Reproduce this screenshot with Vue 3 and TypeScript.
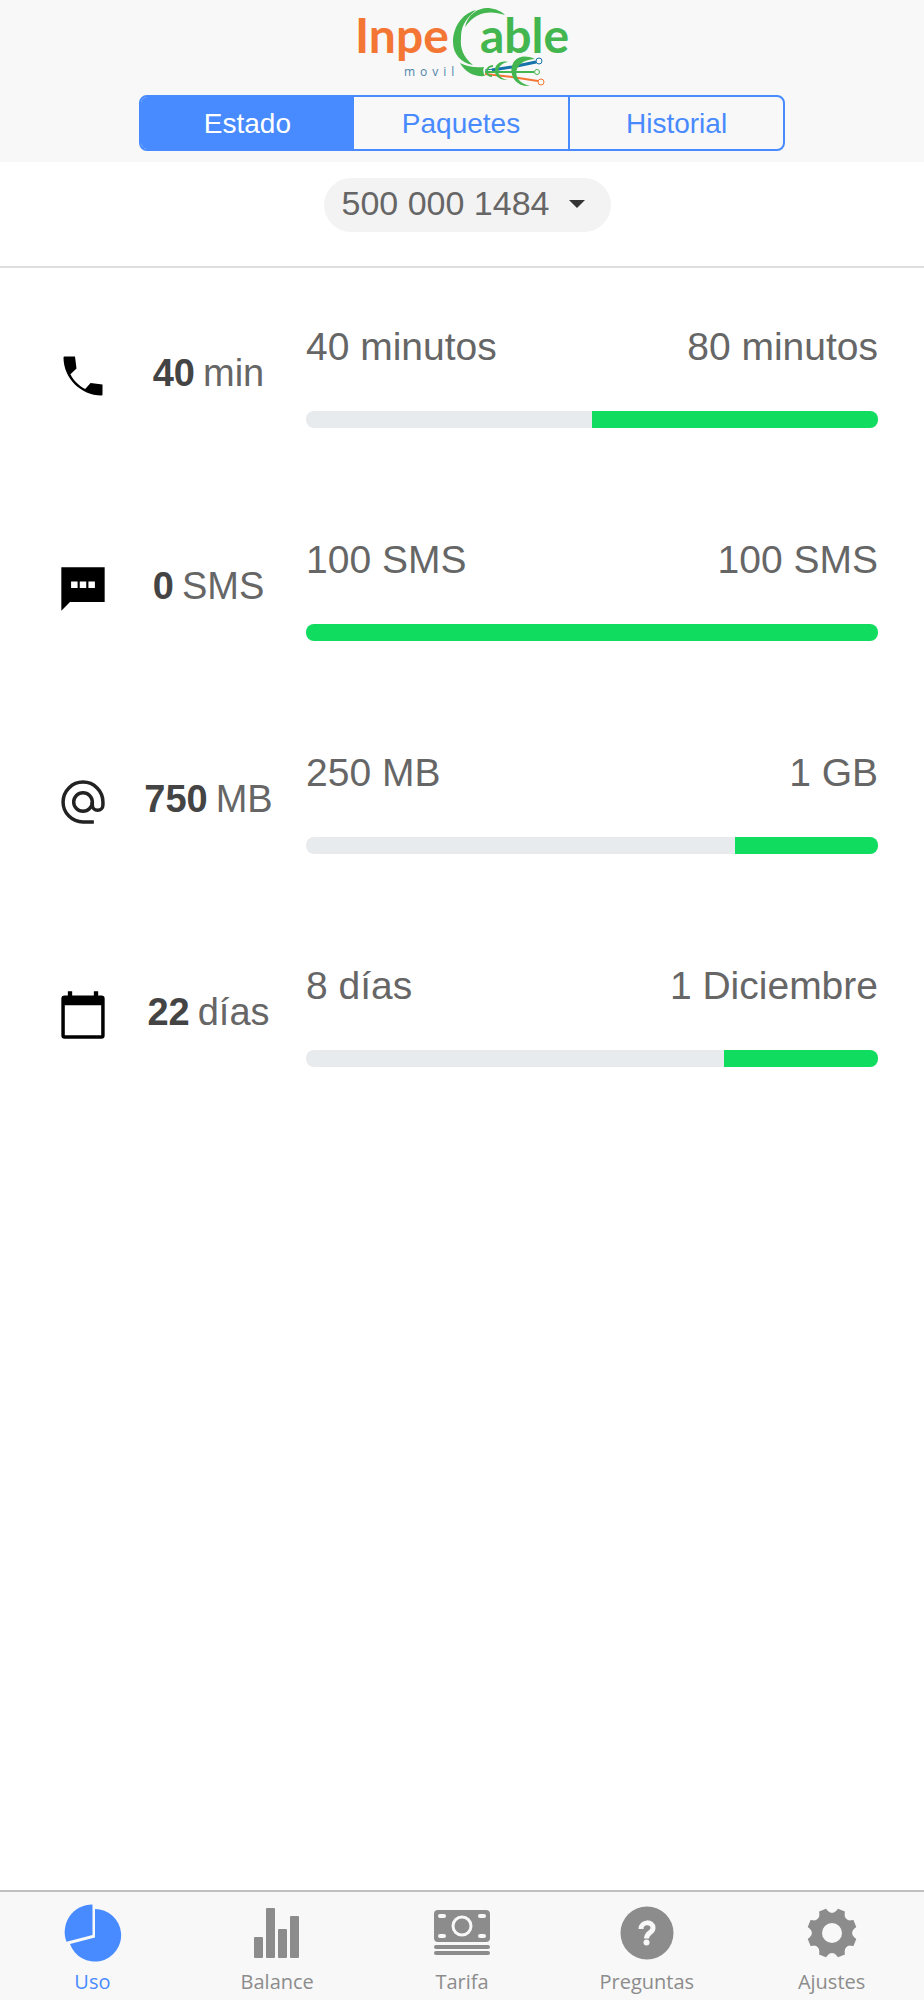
<script setup lang="ts">
import { ref } from 'vue'

type IconName = 'call' | 'text' | 'at' | 'calendar'

interface Usage {
  icon: IconName
  amount: string
  unit: string
  from: string
  to: string
  percent: number
}

const segments = ['Estado', 'Paquetes', 'Historial']
const activeSegment = ref('Estado')

const phones = ['500 000 1484']
const phone = ref(phones[0])

const usages: Usage[] = [
  { icon: 'call', amount: '40', unit: 'min', from: '40 minutos', to: '80 minutos', percent: 50 },
  { icon: 'text', amount: '0', unit: 'SMS', from: '100 SMS', to: '100 SMS', percent: 100 },
  { icon: 'at', amount: '750', unit: 'MB', from: '250 MB', to: '1 GB', percent: 25 },
  { icon: 'calendar', amount: '22', unit: 'días', from: '8 días', to: '1 Diciembre', percent: 27 },
]

const tabs = ['Uso', 'Balance', 'Tarifa', 'Preguntas', 'Ajustes']
const activeTab = ref('Uso')

// Gear outline: eight teeth separated by round notches.
const gear = (() => {
  const point = (r: number, deg: number) => {
    const a = (deg * Math.PI) / 180
    return `${(30 + r * Math.cos(a)).toFixed(2)} ${(30 + r * Math.sin(a)).toFixed(2)}`
  }
  let d = ''
  for (let i = 0; i < 8; i++) {
    const c = i * 45
    d += `${i ? 'L' : 'M'}${point(25, c - 14)}L${point(22.6, c - 11)}A5.5 5.5 0 0 0 ${point(22.6, c + 11)}L${point(25, c + 14)}`
  }
  return d + 'Z'
})()
</script>

<template>
  <div class="app">
    <header class="header">
      <svg class="logo" viewBox="0 0 240 92" role="img" aria-label="InpeCable movil">
        <text class="word orange" x="13" y="53">Inpe</text>
        <text class="word green" x="138" y="53">able</text>
        <text class="sub" x="62" y="76">movil</text>
        <path class="green" d="M134 10C119 14 111 28 111 42C111 54 119 63 131 65C121 57 118 48 119 38C119 29 121 21 134 10Z" />
        <path class="green" d="M123 27C126 13 138 7 147 8C154 9 159 11 163 15C147 10 134 12 123 27Z" />
        <path class="green" d="M118 63C126 67 134 68 142 67Q140 71 143 76C132 77 123 72 118 63Z" />
        <g fill="none">
          <path stroke="#1672a8" stroke-width="3" d="M150 70L170 67L194 62" />
          <path stroke="#1672a8" d="M143 70L153 69" />
          <path stroke="#44b64f" stroke-width="2" d="M143 72H192" />
          <path stroke="#f47634" stroke-width="2" d="M143 74L170 77L196 81" />
          <path stroke="#44b64f" stroke-width="2" d="M151 66C144 66 142 76 150 76" />
          <path class="green" stroke="none" d="M166 62C150 58 147 81 166 80C153 78 153 64 166 62Z" />
          <path class="green" stroke="none" d="M193 59C164 46 161 88 188 86C168 82 170 60 193 59Z" />
          <circle cx="197" cy="61" r="3" fill="#f8f8f8" stroke="#1672a8" />
          <circle cx="195" cy="72" r="2.500" fill="#f8f8f8" stroke="#44b64f" />
          <circle cx="199" cy="82" r="3" fill="#f8f8f8" stroke="#f47634" />
        </g>
      </svg>
      <nav class="segments" aria-label="Secciones">
        <button v-for="s in segments" :key="s" type="button" :class="{ active: s === activeSegment }" @click="activeSegment = s">{{ s }}</button>
      </nav>
    </header>

    <div class="picker">
      <div class="pill">
        <select v-model="phone" aria-label="Número de teléfono">
          <option v-for="p in phones" :key="p">{{ p }}</option>
        </select>
        <svg class="caret" viewBox="0 0 16 8" aria-hidden="true"><path d="M0 0H16L8 8Z" /></svg>
      </div>
    </div>

    <main class="usages">
      <section v-for="u in usages" :key="u.icon" class="usage">
        <svg class="usage-icon" viewBox="0 0 24 24" aria-hidden="true">
          <path v-if="u.icon === 'call'" d="M3.500 3H8.300L9 8.500L6.200 11.200C7.800 14.300 10 16.400 13 18L15.500 15.200L21 15.900V20.500Q21 21 20.500 21C11 21 3 13 3 3.500Q3 3 3.500 3Z" />
          <path v-else-if="u.icon === 'text'" fill-rule="evenodd" d="M2 2H22V18H6L2 22ZM6.500 8.500V11.500H9.500V8.500ZM10.500 8.500V11.500H13.500V8.500ZM14.500 8.500V11.500H17.500V8.500Z" />
          <g v-else-if="u.icon === 'at'" class="outline">
            <path d="M17 21.200H12A9.200 9.200 0 1 1 21.200 12V13.400A2.450 2.450 0 0 1 16.300 13.400V12" />
            <circle cx="12" cy="12" r="4.300" />
          </g>
          <path v-else fill-rule="evenodd" d="M5 1H7V3H17V1H19V3H20.500Q22 3 22 4.500V21.500Q22 23 20.500 23H3.500Q2 23 2 21.500V4.500Q2 3 3.500 3H5ZM3.600 7.500V21.400H20.400V7.500Z" />
        </svg>
        <p class="amount"><strong>{{ u.amount }}</strong><span>{{ u.unit }}</span></p>
        <div class="detail">
          <div class="range"><span>{{ u.from }}</span><span>{{ u.to }}</span></div>
          <div class="bar" role="progressbar" :aria-label="u.unit" :aria-valuenow="u.percent" aria-valuemin="0" aria-valuemax="100">
            <div class="fill" :style="{ width: u.percent + '%' }"></div>
          </div>
        </div>
      </section>
    </main>

    <nav class="tabs" aria-label="Principal">
      <button v-for="t in tabs" :key="t" type="button" :class="{ active: t === activeTab }" @click="activeTab = t">
        <svg viewBox="0 0 60 60" aria-hidden="true">
          <template v-if="t === 'Uso'">
            <path d="M30.500 1.500V32L4.500 38.800A27.500 27.500 0 0 1 30.500 1.500Z" />
            <path d="M33 6A26.300 26.300 0 1 1 8 41L33 34.500Z" />
          </template>
          <g v-else-if="t === 'Balance'">
            <rect x="7" y="34" width="9" height="21" rx="1" />
            <rect x="19" y="5" width="9" height="50" rx="1" />
            <rect x="31" y="26" width="9" height="29" rx="1" />
            <rect x="43" y="13" width="9" height="42" rx="1" />
          </g>
          <template v-else-if="t === 'Tarifa'">
            <path fill-rule="evenodd" d="M6 7H54Q58 7 58 11V35Q58 39 54 39H6Q2 39 2 35V11Q2 7 6 7ZM30 12.500A10.500 10.500 0 1 0 30 33.500A10.500 10.500 0 1 0 30 12.500ZM8 11A2 2 0 0 0 8 15H12A2 2 0 0 0 12 11ZM48 11A2 2 0 0 0 48 15H52A2 2 0 0 0 52 11ZM8 31A2 2 0 0 0 8 35H12A2 2 0 0 0 12 31ZM48 31A2 2 0 0 0 48 35H52A2 2 0 0 0 52 31Z" />
            <circle cx="30" cy="23" r="7.500" />
            <rect x="2" y="42" width="56" height="4" rx="2" />
            <rect x="2" y="48" width="56" height="4" rx="2" />
          </template>
          <template v-else-if="t === 'Preguntas'">
            <circle cx="30" cy="30" r="26.500" />
            <path fill="none" stroke="#f8f8f8" stroke-width="5" d="M24 26C24 18 36 18 36 25C36 30 29.500 29 29.500 35.500" />
            <circle cx="29.500" cy="39.500" r="3" fill="#f8f8f8" />
          </template>
          <template v-else>
            <path :d="gear" />
            <circle cx="30" cy="30" r="10" fill="#f8f8f8" />
          </template>
        </svg>
        <span>{{ t }}</span>
      </button>
    </nav>
  </div>
</template>

<style>
body {
  margin: 0;
  background: #fff;
}
</style>

<style scoped>
.app {
  display: flex;
  flex-direction: column;
  min-height: 100vh;
  font-family: "Liberation Sans", Arial, sans-serif;
  color: #555;
}
button,
select {
  margin: 0;
  border: 0;
  background: none;
  font: inherit;
  color: inherit;
  cursor: pointer;
}
.header {
  display: flex;
  flex-direction: column;
  align-items: center;
  gap: 3px;
  padding-bottom: 11px;
  background: #f8f8f8;
}
.logo {
  width: 240px;
  height: 92px;
}
.word {
  font: 700 48px Lato, sans-serif;
}
.orange {
  fill: #f47634;
}
.green {
  fill: #44b64f;
}
.sub {
  font: 12px "Open Sans", sans-serif;
  letter-spacing: 5px;
  fill: #4d84ab;
}
.segments {
  display: flex;
  box-sizing: border-box;
  width: 70%;
  height: 56px;
  border: 2px solid #488aff;
  border-radius: 8px;
  overflow: hidden;
}
.segments button {
  flex: 1 1 0;
  padding: 2px 0 0;
  font-size: 28px;
  color: #488aff;
}
.segments button:last-child {
  border-left: 2px solid #488aff;
}
.segments .active {
  background: #488aff;
  color: #fff;
}
.picker {
  display: flex;
  justify-content: center;
  padding: 16px 0 34px;
  border-bottom: 2px solid #dedede;
}
.pill {
  position: relative;
  margin-left: 10px;
}
.pill select {
  display: block;
  height: 54px;
  padding: 0 61px 4px 18px;
  border-radius: 27px;
  appearance: none;
  background: #f3f3f3;
  font-size: 34px;
  color: #666;
}
.caret {
  position: absolute;
  top: 22px;
  right: 26px;
  width: 16px;
  height: 8px;
  fill: #333;
  pointer-events: none;
}
.usages {
  flex: 1;
  padding: 54px 46px 0 57px;
}
.usage {
  display: grid;
  grid-template-columns: 54px 195px 1fr;
  align-items: center;
  height: 108px;
  margin-bottom: 105px;
}
.usage-icon {
  width: 52px;
  height: 52px;
  fill: #000;
}
.outline {
  fill: none;
  stroke: #222;
  stroke-width: 1.6;
}
.amount {
  display: flex;
  justify-content: center;
  gap: 8px;
  margin: 0;
  padding-bottom: 6px;
  font-size: 38px;
  line-height: 44px;
  color: #666;
}
.amount strong {
  color: #444;
}
.detail {
  display: flex;
  flex-direction: column;
  gap: 42px;
}
.range {
  display: flex;
  justify-content: space-between;
  font-size: 39px;
  line-height: 44px;
  color: #666;
}
.bar {
  display: flex;
  justify-content: flex-end;
  height: 17px;
  border-radius: 8px;
  background: #e8ebee;
  overflow: hidden;
}
.fill {
  background: #10dc60;
}
.tabs {
  display: flex;
  height: 108px;
  border-top: 2px solid #c0c0c0;
  background: #f8f8f8;
}
.tabs button {
  flex: 1;
  display: flex;
  flex-direction: column;
  align-items: center;
  padding: 11px 0 0;
  font-family: "Open Sans", sans-serif;
  font-size: 20px;
  line-height: 28px;
  color: #8c8c8c;
}
.tabs svg {
  width: 60px;
  height: 60px;
  margin-bottom: 5px;
  fill: currentColor;
}
.tabs .active {
  color: #488aff;
}
</style>
